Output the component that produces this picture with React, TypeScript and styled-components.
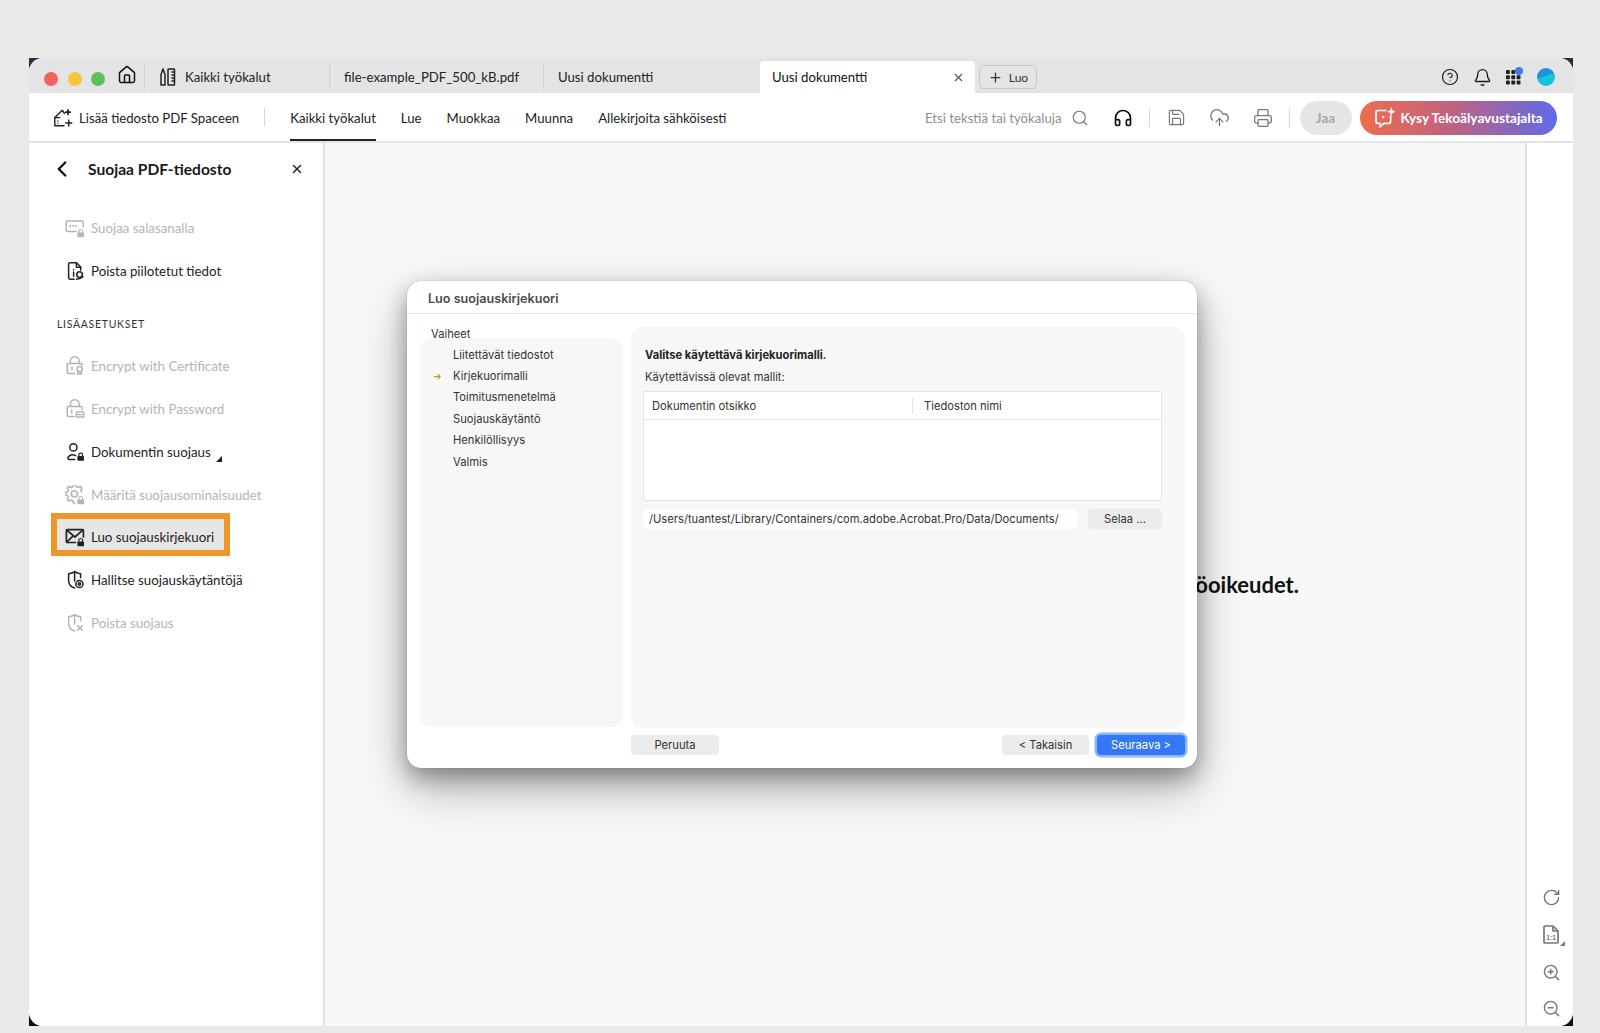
import React from "react";
import styled, { createGlobalStyle } from "styled-components";
import { X, Plus, ChevronLeft, Search, CircleHelp, Bell, Home, Headphones, Save, CloudUpload, Printer, RotateCw, ZoomIn, ZoomOut } from "lucide-react";

const UI_FONT = `Lato, "Open Sans", sans-serif`;
const MAC_FONT = `Inter, "Liberation Sans", Arial, sans-serif`;

interface IconProps {
	children?: React.ReactNode;
}

function Glyph({ children }: IconProps) {
	return (
		<svg width="20" height="20" viewBox="0 0 20 20" fill="none" stroke="currentColor" strokeWidth="1.5" strokeLinecap="round" strokeLinejoin="round">
			{children}
		</svg>
	);
}

function Lock({ x = 12, y = 11 }: { x?: number; y?: number }) {
	return (
		<g transform={`translate(${x} ${y})`}>
			<path d="M1.8 3.5V2.4a1.9 1.9 0 0 1 3.8 0v1.1" strokeWidth="1.2" />
			<rect x="0.4" y="3.4" width="6.6" height="4.8" rx="0.8" fill="currentColor" stroke="none" />
		</g>
	);
}

const PasswordIcon = () => (
	<Glyph>
		<path d="M11 13.5H2.2a1 1 0 0 1-1-1V4a1 1 0 0 1 1-1h15a1 1 0 0 1 1 1v5" />
		<path d="M5 8h.2M8 8h.2M11 8h.2" strokeWidth="1.8" />
		<Lock />
	</Glyph>
);

const RedactIcon = () => (
	<Glyph>
		<path d="M9 18.2H5a1.4 1.4 0 0 1-1.4-1.4V3.2A1.4 1.4 0 0 1 5 1.8h6.5l4.2 4.2v3" />
		<path d="M11.4 2v4.2h4.2" />
		<path d="M8.6 11v4.2M8.6 8.6v.2" strokeWidth="1.5" />
		<circle cx="14.6" cy="13.6" r="2.8" />
		<path d="M11.4 18.2c1.8-.2 4.6-.6 6.6-2.4" />
	</Glyph>
);

const CertLockIcon = () => (
	<Glyph>
		<path d="M9.5 17.5H3.2a1 1 0 0 1-1-1V8.6a1 1 0 0 1 1-1h13a1 1 0 0 1 1 1v.6" />
		<path d="M5.4 7.4V5.2a4.4 4.4 0 0 1 8.8 0v2.2" />
		<path d="M7 11v3" strokeWidth="1.5" />
		<circle cx="14.6" cy="13" r="2.6" />
		<path d="M13 15.4v3l1.6-1 1.6 1v-3" />
	</Glyph>
);

const PasswordLockIcon = () => (
	<Glyph>
		<path d="M9.5 17.5H3.2a1 1 0 0 1-1-1V8.6a1 1 0 0 1 1-1h13a1 1 0 0 1 1 1v2" />
		<path d="M5.4 7.4V5.2a4.4 4.4 0 0 1 8.8 0v2.2" />
		<path d="M6.6 11v3" strokeWidth="1.5" />
		<rect x="11.4" y="12.8" width="7.4" height="5.2" rx="0.8" />
		<path d="M13 15.4h4" />
	</Glyph>
);

const UserLockIcon = () => (
	<Glyph>
		<circle cx="8.4" cy="5.4" r="3.6" />
		<path d="M10.6 13.6c-3-1.6-5.6-.8-7.2 1.2-1 1.2-.6 2.6 1 2.6h5.2" />
		<Lock x={12} y={10.6} />
	</Glyph>
);

const GearLockIcon = () => (
	<Glyph>
		<path d="M9.6 18H8.4l-.6-2.2-1.8-.8-2 1.1-1.7-1.7 1.1-2-.8-1.9L.6 9.9V7.6l2-.6.8-1.9-1.1-2L4 1.4l2 1.1 1.9-.8.6-2h2.2l.6 2 1.9.8 2-1.1 1.7 1.7-1.1 2 .7 1.9" />
		<circle cx="9.4" cy="8.8" r="3.1" />
		<Lock x={12} y={11} />
	</Glyph>
);

const MailLockIcon = () => (
	<Glyph>
		<path d="M10.5 15.5H2.4a1 1 0 0 1-1-1V3.6a1 1 0 0 1 1-1h15a1 1 0 0 1 1 1V10" strokeWidth="1.7" />
		<path d="M1.8 3.2L9.9 10l7.9-6.8M1.8 14.8l5.4-5" strokeWidth="1.7" />
		<Lock x={12} y={11} />
	</Glyph>
);

const ShieldGearIcon = () => (
	<Glyph>
		<path d="M9.6 18c-3.4-1.2-6-3.8-6-7.6V3.8C6 3.6 8 3 9.6 1.6c1.6 1.4 3.6 2 6 2.2v4" />
		<path d="M9.6 1.8V11" />
		<circle cx="14.4" cy="14" r="3.6" />
		<circle cx="14.4" cy="14" r="1.2" />
	</Glyph>
);

const ShieldXIcon = () => (
	<Glyph>
		<path d="M9.6 18c-3.4-1.2-6-3.8-6-7.6V3.8C6 3.6 8 3 9.6 1.6c1.6 1.4 3.6 2 6 2.2v4" />
		<path d="M9.6 1.8V11" />
		<path d="M12.6 12.6l4.6 4.6M17.2 12.6l-4.6 4.6" />
	</Glyph>
);

const ToolsIcon = () => (
	<svg width="18" height="20" viewBox="0 0 18 20" fill="none" stroke="currentColor" strokeWidth="1.5" strokeLinejoin="round">
		<path d="M2 7.5L4 2l2 5.5V18H2z" />
		<rect x="9" y="2" width="6.5" height="16" rx="0.6" />
		<path d="M12.5 5h3M12.5 8h3M12.5 11h3M12.5 14h3" />
	</svg>
);

const AddFileIcon = () => (
	<svg width="21" height="20" viewBox="0 0 21 20" fill="none" stroke="currentColor" strokeWidth="1.4" strokeLinecap="round" strokeLinejoin="round">
		<path d="M9 2.5L1.8 9.6v8.2H11" />
		<path d="M1.8 9.6h5M4.8 13h.1M4.8 15.6h.1" />
		<path d="M9.5 2.5l2 3" />
		<path d="M15.8 12v6M12.8 15h6" />
		<path d="M15 2v4.4M12.8 4.2h4.4" strokeWidth="1.8" />
	</svg>
);

const AppsIcon = () => (
	<AppsFrame>
		<svg width="15" height="15" viewBox="0 0 17 17" fill="#222">
			{[0, 6, 12].map((y) =>
				[0, 6, 12].map((x) => <rect key={`${x}-${y}`} x={x} y={y} width="4.4" height="4.4" rx="1" />)
			)}
		</svg>
		<AppsBadge />
	</AppsFrame>
);

const AiChatIcon = () => (
	<svg width="22" height="22" viewBox="0 0 22 22" fill="none" stroke="#fff" strokeWidth="1.7" strokeLinecap="round" strokeLinejoin="round">
		<path d="M12 3.5H3.4A1.4 1.4 0 0 0 2 4.9v10a1.4 1.4 0 0 0 1.4 1.4H6v3.6l3.8-3.6h5.4a1.4 1.4 0 0 0 1.4-1.4V9" />
		<path d="M9 10h.2" strokeWidth="2.4" />
		<path d="M17.4 1.2l.9 2.6 2.6.9-2.6.9-.9 2.6-.9-2.6-2.6-.9 2.6-.9z" fill="#fff" strokeWidth="0.8" />
	</svg>
);

const SizeIcon = () => (
	<svg width="20" height="22" viewBox="0 0 20 22" fill="none" stroke="currentColor" strokeWidth="1.7" strokeLinejoin="round">
		<path d="M3 2h8l5 5v11a1 1 0 0 1-1 1H3a1 1 0 0 1-1-1V3a1 1 0 0 1 1-1z" />
		<path d="M11 2v5h5" />
		<text x="9" y="16" fontSize="7" fontWeight="700" textAnchor="middle" fill="currentColor" stroke="none" fontFamily="Liberation Sans">1:1</text>
	</svg>
);

const TOOLS = [
	{ label: "Suojaa salasanalla", icon: <PasswordIcon />, disabled: true },
	{ label: "Poista piilotetut tiedot", icon: <RedactIcon /> },
];

const ADVANCED = [
	{ label: "Encrypt with Certificate", icon: <CertLockIcon />, disabled: true },
	{ label: "Encrypt with Password", icon: <PasswordLockIcon />, disabled: true },
	{ label: "Dokumentin suojaus", icon: <UserLockIcon />, more: true },
	{ label: "Määritä suojausominaisuudet", icon: <GearLockIcon />, disabled: true },
	{ label: "Luo suojauskirjekuori", icon: <MailLockIcon />, active: true },
	{ label: "Hallitse suojauskäytäntöjä", icon: <ShieldGearIcon /> },
	{ label: "Poista suojaus", icon: <ShieldXIcon />, disabled: true },
];

const STEPS = ["Liitettävät tiedostot", "Kirjekuorimalli", "Toimitusmenetelmä", "Suojauskäytäntö", "Henkilöllisyys", "Valmis"];

interface ToolItem {
	label: string;
	icon: React.ReactNode;
	disabled?: boolean;
	active?: boolean;
	more?: boolean;
}

function ToolRow({ item }: { item: ToolItem }) {
	return (
		<Row $disabled={item.disabled} $active={item.active}>
			<RowIcon>{item.icon}</RowIcon>
			{item.label}
			{item.more && <MoreMark />}
		</Row>
	);
}

export default function App() {
	return (
		<>
			<GlobalStyle />
			<AppWindow>
				<WindowInner>
					<TabBar>
						<Lights>
							<Light $color="#f2615f" />
							<Light $color="#f6c33f" />
							<Light $color="#5fbf5f" />
						</Lights>
						<HomeButton>
							<Home size={20} strokeWidth={1.8} />
						</HomeButton>
						<Tab $width={185} $pad={14}>
							<ToolsIcon />
							Kaikki työkalut
						</Tab>
						<Tab $width={214} $pad={14}>file-example_PDF_500_kB.pdf</Tab>
						<Tab $width={217} $pad={14}>Uusi dokumentti</Tab>
						<ActiveTab>
							Uusi dokumentti
							<X size={13} strokeWidth={2} color="#555" />
						</ActiveTab>
						<NewButton>
							<Plus size={15} strokeWidth={2} />
							Luo
						</NewButton>
						<TabIcons>
							<CircleHelp size={18} strokeWidth={1.6} />
							<Bell size={19} strokeWidth={1.7} />
							<AppsIcon />
							<Avatar />
						</TabIcons>
					</TabBar>
					<Toolbar>
						<AddFile>
							<AddFileIcon />
							Lisää tiedosto PDF Spaceen
						</AddFile>
						<Divider $gap={25} />
						<NavLink $active>Kaikki työkalut</NavLink>
						<NavLink>Lue</NavLink>
						<NavLink>Muokkaa</NavLink>
						<NavLink>Muunna</NavLink>
						<NavLink>Allekirjoita sähköisesti</NavLink>
						<ToolbarRight>
							<SearchHint>Etsi tekstiä tai työkaluja</SearchHint>
							<Search size={18} strokeWidth={1.5} color="#777" />
							<Headphones size={20} strokeWidth={2} color="#111" />
							<Divider $gap={17} />
							<Save size={19} strokeWidth={1.5} color="#777" />
							<CloudUpload size={21} strokeWidth={1.5} color="#777" />
							<PrintSlot>
								<Printer size={20} strokeWidth={1.5} color="#777" />
							</PrintSlot>
							<Divider $gap={16} />
							<ShareButton>Jaa</ShareButton>
							<AskButton>
								<AiChatIcon />
								Kysy Tekoälyavustajalta
							</AskButton>
						</ToolbarRight>
					</Toolbar>
					<Workspace>
						<Sidebar>
							<SideHeader>
								<ChevronLeft size={26} strokeWidth={2.2} color="#111" />
								<SideTitle>Suojaa PDF-tiedosto</SideTitle>
								<X size={14} strokeWidth={2.4} color="#222" />
							</SideHeader>
							{TOOLS.map((item) => (
								<ToolRow key={item.label} item={item} />
							))}
							<SectionLabel>LISÄASETUKSET</SectionLabel>
							{ADVANCED.map((item) => (
								<ToolRow key={item.label} item={item} />
							))}
						</Sidebar>
						<DocArea>
							<DocMessage>käyttöoikeudet.</DocMessage>
						</DocArea>
						<Rail>
							<RotateCw size={19} strokeWidth={1.8} />
							<SizeButton>
								<SizeIcon />
								<SizeMark />
							</SizeButton>
							<ZoomIn size={19} strokeWidth={1.8} />
							<ZoomOut size={19} strokeWidth={1.8} />
						</Rail>
					</Workspace>
					<Dialog>
						<DialogTitle>Luo suojauskirjekuori</DialogTitle>
						<DialogBody>
							<StepsColumn>
								<StepsLabel>Vaiheet</StepsLabel>
								<StepsPane>
									{STEPS.map((step, index) => (
										<Step key={step}>
											<StepArrow>{index === 1 && "➜"}</StepArrow>
											{step}
										</Step>
									))}
								</StepsPane>
							</StepsColumn>
							<ContentPane>
								<ContentHeading>Valitse käytettävä kirjekuorimalli.</ContentHeading>
								<ContentLine>Käytettävissä olevat mallit:</ContentLine>
								<TemplateTable>
									<TableHead>
										<HeadCell $width={268}>Dokumentin otsikko</HeadCell>
										<HeadCell $bordered>Tiedoston nimi</HeadCell>
									</TableHead>
								</TemplateTable>
								<PathRow>
									<PathField>/Users/tuantest/Library/Containers/com.adobe.Acrobat.Pro/Data/Documents/</PathField>
									<DialogButton $width={74}>Selaa ...</DialogButton>
								</PathRow>
							</ContentPane>
						</DialogBody>
						<DialogFooter>
							<DialogButton $width={88}>Peruuta</DialogButton>
							<FooterRight>
								<DialogButton $width={87}>&lt; Takaisin</DialogButton>
								<PrimaryButton>Seuraava &gt;</PrimaryButton>
							</FooterRight>
						</DialogFooter>
					</Dialog>
				</WindowInner>
			</AppWindow>
		</>
	);
}

const GlobalStyle = createGlobalStyle`
	html, body {
		margin: 0;
		height: 100%;
		background: #e9e9e9;
		font-family: ${UI_FONT};
		overflow: hidden;
	}
	* {
		box-sizing: border-box;
	}
`;

const AppWindow = styled.div`
	width: 1544px;
	height: 968px;
	margin: 58px 0 0 29px;
	background: linear-gradient(#1d3346, #0c0f14);
`;

const WindowInner = styled.div`
	position: relative;
	height: 100%;
	border-radius: 14px;
	overflow: hidden;
	background: #fff;
	display: flex;
	flex-direction: column;
`;

const TabBar = styled.div`
	height: 35px;
	flex: none;
	background: #e4e4e4;
	display: flex;
	align-items: flex-end;
	color: #222;
	font-size: 13.2px;
`;

const Lights = styled.div`
	display: flex;
	gap: 9.5px;
	padding: 0 0 7.5px 15px;
`;

const Light = styled.span<{ $color: string }>`
	width: 14px;
	height: 14px;
	border-radius: 50%;
	background: ${(props) => props.$color};
`;

const HomeButton = styled.div`
	width: 39px;
	height: 27px;
	margin-bottom: 5px;
	padding-left: 12px;
	display: flex;
	align-items: center;
	color: #111;
`;

const Tab = styled.div<{ $width: number; $pad: number }>`
	width: ${(props) => props.$width}px;
	height: 25px;
	margin-bottom: 4px;
	padding-left: ${(props) => props.$pad}px;
	border-left: 1px solid #d2d2d2;
	display: flex;
	align-items: center;
	gap: 8px;
	white-space: nowrap;
`;

const ActiveTab = styled.div`
	width: 215px;
	height: 32px;
	padding: 0 10px 0 12px;
	background: #fff;
	border-radius: 4px 4px 0 0;
	display: flex;
	align-items: center;
	justify-content: space-between;
	color: #111;
`;

const NewButton = styled.div`
	width: 58px;
	height: 24px;
	margin: 0 0 4px 4px;
	border: 1px solid #c6c6c6;
	border-radius: 5px;
	display: flex;
	align-items: center;
	justify-content: center;
	gap: 6px;
	font-size: 12px;
	color: #333;
`;

const TabIcons = styled.div`
	margin-left: auto;
	height: 100%;
	padding: 3px 18px 0 0;
	display: flex;
	align-items: center;
	gap: 14px;
	color: #1a1a1a;
`;

const AppsFrame = styled.div`
	position: relative;
	display: flex;
`;

const AppsBadge = styled.span`
	position: absolute;
	top: -3px;
	right: -2px;
	width: 8px;
	height: 8px;
	border-radius: 50%;
	background: #3b7ce8;
`;

const Avatar = styled.span`
	width: 18px;
	height: 18px;
	margin-left: 2px;
	border-radius: 50%;
	background: linear-gradient(160deg, #1795d8 45%, #17c4de 46%);
`;

const Toolbar = styled.div`
	height: 50px;
	flex: none;
	padding: 0 16px 0 24px;
	border-bottom: 2px solid #e4e4e4;
	display: flex;
	align-items: center;
	font-size: 13.2px;
	color: #222;
`;

const AddFile = styled.div`
	display: flex;
	align-items: center;
	gap: 5px;
	padding-top: 1px;
	white-space: nowrap;
`;

const Divider = styled.span<{ $gap: number }>`
	width: 1px;
	height: 18px;
	margin: 0 ${(props) => props.$gap}px;
	background: #d6d6d6;
`;

const NavLink = styled.div<{ $active?: boolean }>`
	height: 48px;
	margin-right: 25px;
	padding-top: 3px;
	display: flex;
	align-items: center;
	white-space: nowrap;
	border-bottom: 2px solid ${(props) => (props.$active ? "#222" : "transparent")};

	&:first-of-type {
		margin-left: -1px;
	}
`;

const ToolbarRight = styled.div`
	margin-left: auto;
	padding-top: 1px;
	display: flex;
	align-items: center;
	gap: 23.5px;

	${Divider} {
		margin: 0 -7px;
	}
`;

const SearchHint = styled.span`
	color: #8e8e8e;
	margin-right: -14px;
`;

const PrintSlot = styled.span`
	display: flex;
	margin-left: -1px;
`;

const ShareButton = styled.div`
	width: 52px;
	height: 34px;
	margin: 1px -15px 0 -7px;
	border-radius: 17px;
	background: #e6e6e6;
	color: #a8a8a8;
	font-weight: 700;
	font-size: 13.5px;
	display: flex;
	align-items: center;
	justify-content: center;
`;

const AskButton = styled.div`
	width: 197px;
	height: 34px;
	margin-top: 1px;
	border-radius: 17px;
	background: linear-gradient(90deg, #ef6c4e, #c0637f 45%, #5f6ae8);
	color: #fff;
	font-weight: 700;
	font-size: 13.6px;
	white-space: nowrap;
	display: flex;
	align-items: center;
	justify-content: center;
	gap: 4px;
`;

const Workspace = styled.div`
	flex: 1;
	display: flex;
	min-height: 0;
`;

const Sidebar = styled.aside`
	width: 296px;
	flex: none;
	padding: 0 0 0 22px;
	background: #fff;
	border-right: 2px solid #e2e2e2;
`;

const SideHeader = styled.div`
	height: 52px;
	margin-bottom: 12px;
	display: flex;
	align-items: center;
	color: #111;

	svg:first-child {
		margin-left: -2px;
	}
	svg:last-child {
		margin-left: auto;
		margin-right: 19px;
	}
`;

const SideTitle = styled.h2`
	margin: 0 0 0 13px;
	font-size: 15.6px;
	font-weight: 700;
	color: #1a1a1a;
`;

const Row = styled.div<{ $disabled?: boolean; $active?: boolean }>`
	width: 179px;
	height: 42.8px;
	padding: ${(props) => (props.$active ? "5px 0 0 7px" : "0 0 0 7px")};
	margin: ${(props) => (props.$active ? "-3px 0 3px" : "0")};
	border: 6px solid ${(props) => (props.$active ? "#f0952a" : "transparent")};
	background: ${(props) => (props.$active ? "#e6e6e6" : "transparent")};
	display: flex;
	align-items: center;
	gap: 6px;
	font-size: 13.3px;
	white-space: nowrap;
	color: ${(props) => (props.$disabled ? "#b4b4b4" : "#222")};
`;

const RowIcon = styled.span`
	display: flex;
	flex: none;
	width: 20px;
	margin-left: 1px;
`;

const MoreMark = styled.span`
	width: 0;
	height: 0;
	margin: 13px 0 0 -1px;
	border-style: solid;
	border-width: 0 0 6px 6px;
	border-color: transparent transparent #222 transparent;
`;

const SectionLabel = styled.div`
	height: 52.5px;
	padding: 23px 0 0 0;
	font-size: 10.5px;
	letter-spacing: 0.7px;
	color: #333;
	line-height: 16px;
	margin-left: 6px;
`;

const DocArea = styled.main`
	flex: 1;
	background: #f8f8f8;
	display: flex;
	align-items: center;
	justify-content: flex-end;
	padding-right: 226px;
`;

const DocMessage = styled.div`
	font-size: 22px;
	font-weight: 700;
	color: #111;
`;

const Rail = styled.div`
	width: 48px;
	flex: none;
	padding: 0 0 8px 15px;
	background: #fff;
	border-left: 2px solid #e2e2e2;
	display: flex;
	flex-direction: column;
	justify-content: flex-end;
	gap: 17px;
	color: #777;
`;

const SizeButton = styled.div`
	position: relative;
	width: 20px;
	display: flex;
`;

const SizeMark = styled.span`
	position: absolute;
	right: -3px;
	bottom: 0;
	width: 0;
	height: 0;
	border-style: solid;
	border-width: 0 0 5px 5px;
	border-color: transparent transparent #777 transparent;
`;

const Dialog = styled.section`
	position: absolute;
	left: 378px;
	top: 223px;
	width: 790px;
	height: 487px;
	border-radius: 14px;
	background: #fff;
	box-shadow: 0 0 1px rgba(0, 0, 0, 0.4), 0 10px 22px rgba(0, 0, 0, 0.32), 0 20px 50px rgba(0, 0, 0, 0.28);
	font-family: ${MAC_FONT};
	font-size: 11.2px;
	color: #333;
	display: flex;
	flex-direction: column;
`;

const DialogTitle = styled.h1`
	height: 33px;
	flex: none;
	margin: 0;
	padding: 2px 0 0 21px;
	border-bottom: 1px solid #e6e6e6;
	font-size: 12.6px;
	font-weight: 600;
	line-height: 31px;
	color: #4b4b4b;
`;

const DialogBody = styled.div`
	height: 413px;
	flex: none;
	padding: 13px 12px 0 13px;
	display: flex;
	gap: 8px;
`;

const StepsColumn = styled.div`
	width: 203px;
	display: flex;
	flex-direction: column;
`;

const StepsLabel = styled.div`
	line-height: 14px;
	margin: 0 0 -3px 11px;
	position: relative;
	z-index: 1;
`;

const StepsPane = styled.div`
	height: 393px;
	padding-top: 6px;
	background: #f7f7f7;
	border-radius: 12px;
`;

const Step = styled.div`
	height: 21.4px;
	display: flex;
	align-items: center;
`;

const StepArrow = styled.span`
	width: 33px;
	padding-left: 13px;
	color: #c79a2b;
	font-size: 10px;
	font-family: "DejaVu Sans", sans-serif;
`;

const ContentPane = styled.div`
	width: 554px;
	height: 401px;
	padding: 21px 23px 0 12px;
	background: #f7f7f7;
	border-radius: 12px;
`;

const ContentHeading = styled.div`
	margin-left: 2px;
	line-height: 14px;
	font-weight: 700;
	color: #222;
`;

const ContentLine = styled.div`
	margin: 7.5px 0 7.5px 2px;
	line-height: 14px;
`;

const TemplateTable = styled.div`
	height: 110px;
	background: #fff;
	border: 1px solid #e3e3e3;
`;

const TableHead = styled.div`
	height: 28px;
	border-bottom: 1px solid #e3e3e3;
	display: flex;
	align-items: center;
`;

const HeadCell = styled.div<{ $width?: number; $bordered?: boolean }>`
	width: ${(props) => (props.$width ? `${props.$width}px` : "auto")};
	padding-left: ${(props) => (props.$bordered ? "11px" : "8px")};
	border-left: ${(props) => (props.$bordered ? "1px solid #e3e3e3" : "none")};
	line-height: 16px;
`;

const PathRow = styled.div`
	margin-top: 7.5px;
	display: flex;
	justify-content: space-between;
	gap: 10px;
`;

const PathField = styled.div`
	flex: 1;
	height: 20px;
	padding-left: 6px;
	background: #fff;
	border-radius: 6px;
	line-height: 20px;
	white-space: nowrap;
`;

const DialogButton = styled.div<{ $width: number }>`
	width: ${(props) => props.$width}px;
	height: 20px;
	background: #ececec;
	border-radius: 4px;
	display: flex;
	align-items: center;
	justify-content: center;
`;

const PrimaryButton = styled.div`
	width: 88px;
	height: 20px;
	background: #3478f6;
	border-radius: 4px;
	box-shadow: 0 0 0 2.5px #8fb6f8;
	color: #fff;
	display: flex;
	align-items: center;
	justify-content: center;
`;

const DialogFooter = styled.div`
	margin-top: 8px;
	padding: 0 12px 0 224px;
	display: flex;
	justify-content: space-between;
`;

const FooterRight = styled.div`
	display: flex;
	gap: 8px;
	margin-left: -1px;
`;
